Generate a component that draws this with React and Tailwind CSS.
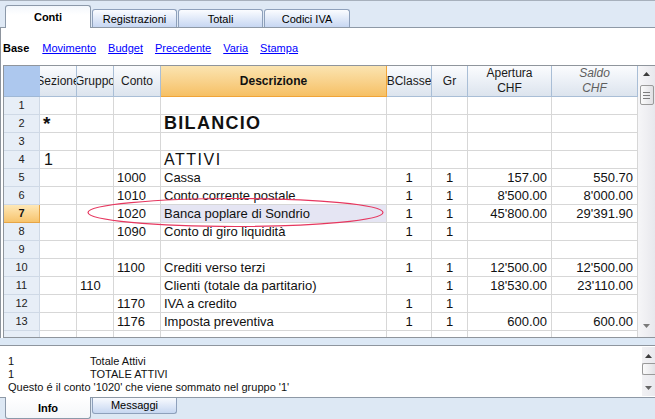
import React from "react";

const rows = [
  { n: 1 },
  { n: 2, sez: "*", desc: "BILANCIO", kind: "h1" },
  { n: 3 },
  { n: 4, sez: "1", desc: "ATTIVI", kind: "h2" },
  { n: 5, conto: "1000", desc: "Cassa", bc: "1", gr: "1", ap: "157.00", sa: "550.70" },
  { n: 6, conto: "1010", desc: "Conto corrente postale", bc: "1", gr: "1", ap: "8'500.00", sa: "8'000.00" },
  { n: 7, conto: "1020", desc: "Banca poplare di Sondrio", bc: "1", gr: "1", ap: "45'800.00", sa: "29'391.90", sel: true },
  { n: 8, conto: "1090", desc: "Conto di giro liquidità", bc: "1", gr: "1" },
  { n: 9 },
  { n: 10, conto: "1100", desc: "Crediti verso terzi", bc: "1", gr: "1", ap: "12'500.00", sa: "12'500.00" },
  { n: 11, grp: "110", desc: "Clienti (totale da partitario)", gr: "1", ap: "18'530.00", sa: "23'110.00" },
  { n: 12, conto: "1170", desc: "IVA a credito", bc: "1", gr: "1" },
  { n: 13, conto: "1176", desc: "Imposta preventiva", bc: "1", gr: "1", ap: "600.00", sa: "600.00" },
  { n: "" },
];

const C = "shrink-0 h-full border-b border-r border-[#d7d7d7] flex items-center overflow-hidden whitespace-nowrap";
const H = "shrink-0 h-full border-b border-r border-[#a9bed6] bg-gradient-to-b from-[#fbfcfe] to-[#dce4ee] flex items-center justify-center overflow-hidden whitespace-nowrap text-[12px] text-[#1a1a1a]";

function DataRow({ r }) {
  let descCls = "text-[13px]";
  if (r.kind === "h1") descCls = "text-[18px] font-bold tracking-[1.3px]";
  if (r.kind === "h2") descCls = "text-[16px] tracking-[1.5px]";
  return (
    <div className="flex h-[18px] text-[13px] leading-[17px] text-[#111]">
      <div
        className={
          r.sel
            ? "w-[36px] shrink-0 h-full border-b border-r border-[#e6a546] bg-gradient-to-b from-[#fee8b6] to-[#f7c46c] flex items-center justify-center text-[11px] font-bold"
            : "w-[36px] shrink-0 h-full border-b border-r border-[#cfd9e6] bg-[#e7eef7] flex items-center justify-center text-[11px] text-[#222]"
        }
      >
        {r.n}
      </div>
      <div className={`${C} w-[37px] pl-[3px]`}>
        {r.kind === "h1" ? (
          <span className="text-[19px] leading-[18px] font-bold">*</span>
        ) : r.kind === "h2" ? (
          <span className="text-[16px] pl-[1px]">1</span>
        ) : null}
      </div>
      <div className={`${C} w-[37px] pl-[3px]`}>{r.grp}</div>
      <div className={`${C} w-[47px] pl-[3px]`}>{r.conto}</div>
      <div className={`${C} w-[226px] pl-[3px] ${r.sel ? "bg-[#e5e5f3]" : ""}`}>
        <span className={descCls}>{r.desc}</span>
      </div>
      <div className={`${C} w-[45px] justify-center`}>{r.bc}</div>
      <div className={`${C} w-[36px] justify-center`}>{r.gr}</div>
      <div className={`${C} w-[84px] justify-end pr-[4px]`}>{r.ap}</div>
      <div className={`${C} w-[86px] justify-end pr-[4px]`}>{r.sa}</div>
    </div>
  );
}

function UpArrow({ cls, color }) {
  return (
    <svg className={cls} width="7" height="4" viewBox="0 0 7 4">
      <path d="M3.5 0 L7 4 L0 4 Z" fill={color} />
    </svg>
  );
}
function DownArrow({ cls, color }) {
  return (
    <svg className={cls} width="7" height="4" viewBox="0 0 7 4">
      <path d="M0 0 L7 0 L3.5 4 Z" fill={color} />
    </svg>
  );
}

export default function App() {
  return (
    <div className="relative w-[655px] h-[419px] overflow-hidden bg-white font-['Liberation_Sans',Arial,sans-serif] text-black">
      {/* Top tab strip */}
      <div className="h-[28px] bg-[#dfe9f5] border-t border-t-[#a7b0bc] border-b border-b-[#8e99a6] flex items-end text-[11px]">
        <div className="relative z-10 ml-[5px] w-[86px] h-[23px] mb-[-1px] bg-gradient-to-b from-[#f3f7fc] to-white to-40% border border-b-0 border-[#8c99aa] rounded-t-[3px] flex items-center justify-center font-bold">
          Conti
        </div>
        <div className="ml-[1px] w-[85px] h-[18px] bg-gradient-to-b from-[#fbfcff] to-[#c7d7f2] border border-b-0 border-[#8ea0bb] rounded-t-[3px] flex items-center justify-center pt-[1px]">
          Registrazioni
        </div>
        <div className="ml-[1px] w-[85px] h-[18px] bg-gradient-to-b from-[#fbfcff] to-[#c7d7f2] border border-b-0 border-[#8ea0bb] rounded-t-[3px] flex items-center justify-center pt-[1px]">
          Totali
        </div>
        <div className="ml-[1px] w-[86px] h-[18px] bg-gradient-to-b from-[#fbfcff] to-[#c7d7f2] border border-b-0 border-[#8ea0bb] rounded-t-[3px] flex items-center justify-center pt-[1px]">
          Codici IVA
        </div>
      </div>

      {/* Main body */}
      <div className="h-[310px] border-l border-[#8d949d]">
        {/* toolbar */}
        <div className="h-[37px] pl-[2px] pt-[14px] flex gap-[12px] text-[11px] leading-[13px]">
          <span className="font-bold mr-[1px]">Base</span>
          <span className="text-[#0000ff] underline">Movimento</span>
          <span className="text-[#0000ff] underline">Budget</span>
          <span className="text-[#0000ff] underline">Precedente</span>
          <span className="text-[#0000ff] underline">Varia</span>
          <span className="text-[#0000ff] underline">Stampa</span>
        </div>

        {/* table */}
        <div className="ml-[2px] h-[273px] border border-r-0 border-[#8f959c] flex overflow-hidden">
          <div className="w-[634px] shrink-0 overflow-hidden">
            <div className="flex h-[31px]">
              <div className="w-[36px] shrink-0 h-full bg-[#adc8ee] border-b border-[#9fb8d6]" />
              <div className={`${H} w-[37px]`}>Sezione</div>
              <div className={`${H} w-[37px]`}>Gruppo</div>
              <div className={`${H} w-[47px]`}>Conto</div>
              <div className="w-[226px] shrink-0 h-full border-b border-r border-[#f0a438] bg-gradient-to-b from-[#fbe4b0] to-[#f6c064] flex items-center justify-center text-[12px] font-bold text-[#111]">
                Descrizione
              </div>
              <div className={`${H} w-[45px]`}>BClasse</div>
              <div className={`${H} w-[36px]`}>Gr</div>
              <div className={`${H} w-[84px] flex-col leading-[15px]`}>
                <span>Apertura</span>
                <span>CHF</span>
              </div>
              <div className={`${H} w-[86px] flex-col leading-[15px] italic text-[#5e5e5e]`}>
                <span>Saldo</span>
                <span>CHF</span>
              </div>
            </div>
            {rows.map((r, i) => (
              <DataRow key={i} r={r} />
            ))}
          </div>
          {/* vertical scrollbar */}
          <div className="w-[17px] shrink-0 bg-gradient-to-r from-[#f6f6f8] to-[#e8e8ed] flex flex-col items-center">
            <UpArrow cls="mt-[6px]" color="#3c3c3c" />
            <div className="mt-[9px] w-[14px] h-[20px] rounded-[2px] border border-[#9a9a9a] bg-gradient-to-r from-[#fbfbfb] to-[#e0e0e4] flex flex-col items-center justify-center gap-[2px]">
              <div className="w-[7px] h-px bg-[#7d7d7d]" />
              <div className="w-[7px] h-px bg-[#7d7d7d]" />
              <div className="w-[7px] h-px bg-[#7d7d7d]" />
            </div>
            <div className="flex-1" />
            <DownArrow cls="mb-[9px]" color="#7a7a7a" />
          </div>
        </div>
      </div>

      {/* splitter */}
      <div className="h-[8px] bg-[#dce8f5] border-b border-[#8e959e]" />

      {/* info panel */}
      <div className="h-[51px] flex text-[11px] leading-[13px] text-[#111]">
        <div className="flex-1 pl-[8px] pt-[9px]">
          <div className="flex">
            <span className="w-[82px]">1</span>
            <span>Totale Attivi</span>
          </div>
          <div className="flex">
            <span className="w-[82px]">1</span>
            <span>TOTALE ATTIVI</span>
          </div>
          <div>Questo é il conto '1020' che viene sommato nel gruppo '1'</div>
        </div>
        <div className="w-[13px] my-[1px] bg-gradient-to-r from-[#f2f2f4] to-[#e9e9ee] flex flex-col items-end">
          <UpArrow cls="mt-[7px] mr-[3px]" color="#3c3c3c" />
          <div className="mt-[5px] w-[13px] h-[12px] rounded-l-[2px] border border-r-0 border-[#9a9a9a] bg-gradient-to-r from-[#fbfbfb] to-[#e2e2e6]" />
          <div className="flex-1" />
          <DownArrow cls="mb-[6px] mr-[3px]" color="#666" />
        </div>
      </div>

      {/* bottom tab strip */}
      <div className="h-[22px] bg-[#dde8f4] border-t border-[#8e99a6] flex items-start text-[11px]">
        <div className="relative z-10 ml-[5px] w-[86px] h-[22px] mt-[-1px] bg-gradient-to-b from-white to-[#f4f6f9] border border-t-0 border-[#8c99aa] rounded-b-[3px] flex items-center justify-center pt-[1px] font-bold">
          Info
        </div>
        <div className="ml-[1px] w-[85px] h-[16px] bg-gradient-to-b from-[#f8fafe] to-[#c7d7f1] border border-t-0 border-[#8ea0bb] rounded-b-[3px] flex items-center justify-center pb-[1px]">
          Messaggi
        </div>
      </div>

      {/* red ellipse annotation */}
      <svg className="absolute left-[86px] top-[196px] pointer-events-none" width="302" height="34" viewBox="0 0 302 34">
        <ellipse cx="149.5" cy="16.5" rx="147.5" ry="14" fill="none" stroke="#e6375f" strokeWidth="1.2" />
      </svg>
    </div>
  );
}
